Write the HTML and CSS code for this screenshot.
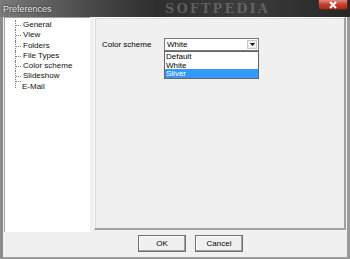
FILE: index.html
```html
<!DOCTYPE html>
<html>
<head>
<meta charset="utf-8">
<link rel="stylesheet" href="styles.css">
</head>
<body>
<div class="window">
  <div class="titlebar">
    <span class="title">Preferences</span>
    <span class="watermark">SOFTPEDIA</span>
    <span class="close">
      <svg width="10" height="8" viewBox="0 0 10 8"><path d="M2 1 L8 7 M8 1 L2 7" stroke="#fff" stroke-width="2"/></svg>
    </span>
  </div>
  <div class="content">
    <div class="tree">
      <div class="node">General</div>
      <div class="node">View</div>
      <div class="node">Folders</div>
      <div class="node">File Types</div>
      <div class="node">Color scheme</div>
      <div class="node">Slideshow</div>
      <div class="node last">E-Mail</div>
    </div>
    <div class="panel">
      <div class="field">
        <span class="label">Color scheme</span>
        <div class="combo">
          <div class="select">
            <span class="value">White</span>
            <span class="arrow"><svg width="5" height="3" viewBox="0 0 5 3"><path d="M0 0 H5 L2.5 3 Z" fill="#000"/></svg></span>
          </div>
          <div class="list">
            <div class="opt">Default</div>
            <div class="opt">White</div>
            <div class="opt sel">Silver</div>
          </div>
        </div>
      </div>
    </div>
  </div>
  <div class="buttons">
    <button class="btn">OK</button>
    <button class="btn">Cancel</button>
  </div>
</div>
</body>
</html>
```

FILE: styles.css
```css
html, body {
  margin: 0;
  padding: 0;
  width: 350px;
  height: 259px;
  overflow: hidden;
  background: #f0f0f0;
}
body {
  font-family: "Liberation Sans", Arial, sans-serif;
  font-size: 8px;
  color: #000;
}
.window {
  width: 350px;
  height: 259px;
  box-sizing: border-box;
  background: #f0f0f0;
  border-left: 3px solid #8c8c8c;
  border-right: 3px solid #9a9a9a;
  border-bottom: 2px solid #9a9a9a;
  display: flex;
  flex-direction: column;
  position: relative;
}
.titlebar {
  height: 17px;
  margin: 0 -3px;
  background: linear-gradient(to right, #7a7a7a 0%, #4a4a4a 25%, #2e2e2e 45%, #3c3c3c 70%, #262626 100%);
  position: relative;
  display: flex;
  align-items: center;
  flex: none;
}
.title {
  color: #f2f2f2;
  font-size: 9px;
  padding-left: 3px;
  text-shadow: 0 0 2px #000;
}
.watermark {
  position: absolute;
  left: 165px;
  top: 1px;
  line-height: 15px;
  font-family: "DejaVu Serif", serif;
  font-weight: bold;
  font-size: 13px;
  letter-spacing: 2px;
  color: rgba(200, 205, 210, 0.28);
}
.close {
  position: absolute;
  right: 2px;
  top: 0;
  width: 30px;
  height: 10px;
  background: linear-gradient(#e08a7e, #c4402e 50%, #a72a1a);
  border: 1px solid #5a2a22;
  border-top: none;
  border-radius: 0 0 3px 3px;
  box-sizing: border-box;
  display: flex;
  align-items: center;
  justify-content: center;
}
.close svg { display: block; }
.content {
  display: flex;
  height: 215px;
  padding-left: 1px;
  flex: none;
}
.tree {
  width: 86px;
  height: 215px;
  box-sizing: border-box;
  background: #fff;
  border-left: 1px solid #a0a0a0;
  border-top: 1px solid #a0a0a0;
  padding: 2px 0 0 10px;
}
.node {
  height: 10.3px;
  line-height: 10px;
  position: relative;
  padding-left: 7px;
  border-left: 1px dotted #808080;
  color: #111;
}
.node::before {
  content: "";
  position: absolute;
  left: 0;
  top: 5px;
  width: 5px;
  border-top: 1px dotted #808080;
}
.node.last {
  border-left: none;
  margin-left: 1px;
  padding-left: 6px;
}
.node.last::before {
  left: -1px;
  top: -1px;
  height: 6px;
  border-left: 1px dotted #808080;
}
.panel {
  margin-left: 4px;
  width: 252px;
  height: 213px;
  box-sizing: border-box;
  border: 1px solid #fff;
  border-right: 2px solid #a0a0a0;
  border-bottom: 2px solid #a0a0a0;
  box-shadow: inset 1px 1px 0 #d8d8d8;
  padding: 20px 0 0 7px;
}
.field {
  display: flex;
  align-items: flex-start;
}
.label {
  width: 62px;
  line-height: 12px;
  padding-top: 1px;
}
.combo {
  width: 95px;
}
.select {
  height: 13px;
  box-sizing: border-box;
  border: 1px solid #7a7a7a;
  background: #fff;
  display: flex;
  align-items: center;
  justify-content: space-between;
  padding-left: 2px;
  padding-right: 1px;
}
.value { line-height: 10px; }
.arrow {
  width: 10px;
  height: 9px;
  box-sizing: border-box;
  background: #f0f0f0;
  border: 1px solid #c8c8c8;
  display: flex;
  align-items: center;
  justify-content: center;
}
.arrow svg { display: block; }
.list {
  border: 1px solid #646464;
  background: #fff;
  box-sizing: border-box;
  height: 28px;
}
.opt {
  height: 8.7px;
  line-height: 9px;
  padding-left: 1px;
}
.opt.sel {
  background: #3399ff;
  color: #fff;
}
.buttons {
  display: flex;
  gap: 9px;
  padding: 3px 0 0 135px;
}
.btn {
  width: 48px;
  height: 17px;
  box-sizing: border-box;
  background: #f0f0f0;
  border: 1px solid #707070;
  box-shadow: inset -1px -1px 0 #a0a0a0, inset 1px 1px 0 #fff;
  font-family: "Liberation Sans", Arial, sans-serif;
  font-size: 8px;
  color: #000;
  padding: 0;
  margin: 0;
}
```
